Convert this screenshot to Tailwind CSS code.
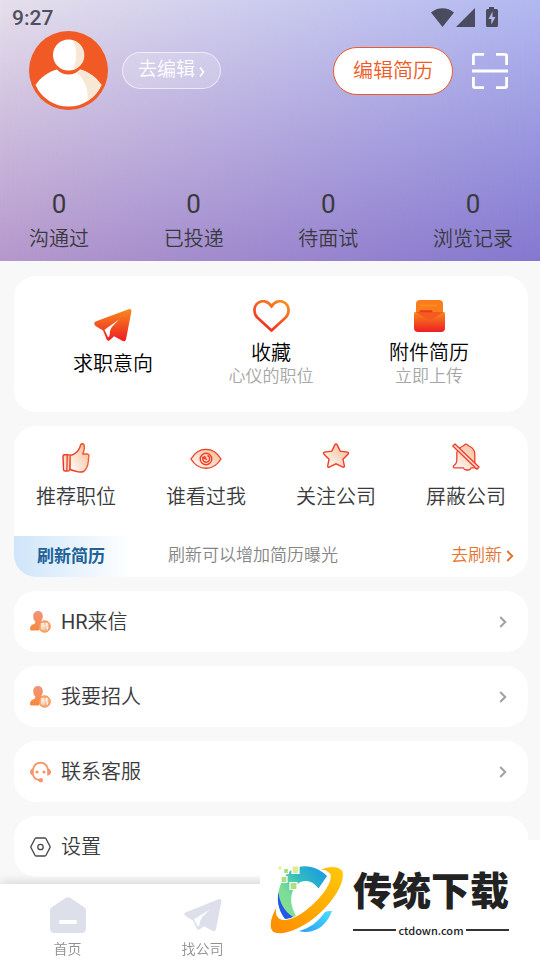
<!DOCTYPE html>
<html lang="zh-CN">
<head>
<meta charset="utf-8">
<meta name="viewport" content="width=device-width, initial-scale=1">
<title>我的</title>
<script src="https://cdn.jsdelivr.net/npm/@tailwindcss/browser@4"></script>
</head>
<body class="min-h-screen bg-[#f8f8f8] font-['Roboto','Noto_Sans_CJK_SC',sans-serif] font-[350] text-[#3a3a3c]">
<svg class="absolute size-0" aria-hidden="true">
  <defs>
    <linearGradient id="fire" x1="0" y1="0" x2="0" y2="1"><stop offset="0" stop-color="#f98a1c"/><stop offset="1" stop-color="#ee1c25"/></linearGradient>
    <linearGradient id="heart" x1="1" y1="0" x2="0.3" y2="1"><stop offset="0" stop-color="#fa931e"/><stop offset="1" stop-color="#f02a26"/></linearGradient>
    <linearGradient id="tint" x1="0" y1="1" x2="1" y2="0"><stop offset="0" stop-color="#ffffff"/><stop offset="1" stop-color="#f4b78f"/></linearGradient>
    <linearGradient id="line" x1="0" y1="0" x2="1" y2="0"><stop offset="0" stop-color="#ee2a2b"/><stop offset="1" stop-color="#f0602f"/></linearGradient>
    <linearGradient id="peach" x1="0" y1="0" x2="0" y2="1"><stop offset="0" stop-color="#f39280"/><stop offset="1" stop-color="#f58b3a"/></linearGradient>
    <symbol id="recruit" viewBox="0 0 21 22">
      <path fill="url(#peach)" d="M8 0c3 0 4.800 2.100 4.800 5.200 0 2.100-.7 3.800-1.800 5 .1 1 .7 1.500 2 2C10 13.500 8.500 16 9 19.400H1.300C.3 19.400 0 18.800 0 18c.2-2.500 1-3.700 3.300-4.700 1.200-.5 2-1 2.100-2.900C4 9.200 3.200 7.400 3.200 5.200 3.200 2.100 5 0 8 0Z"/>
      <circle cx="14.600" cy="15.500" r="5.700" fill="#f8ae7c" stroke="#f58b45"/>
      <path d="M11.500 12.800h2.600M11.500 15h2.600M12 12.500v6M14 12.500v6M15.200 13h3M15.200 15h3M16.700 12v3M15.500 16.800h2.300l-.6 2" stroke="#fff" stroke-width="1" fill="none"/>
    </symbol>
    <symbol id="next" viewBox="0 0 8 12"><path d="M1.200 1l5 5-5 5" fill="none" stroke="currentColor" stroke-width="2"/></symbol>
  </defs>
</svg>

<header class="relative isolate">
  <div class="absolute inset-0 -z-20 bg-linear-to-b from-[#e6e0ec] to-[#b598cc]"></div>
  <div class="absolute inset-0 -z-10 bg-linear-to-b from-[#b1b8f0] to-[#8477cf] [mask-image:linear-gradient(to_right,transparent,black)]"></div>
  <div class="flex h-[31px] items-center justify-between pt-1.5 pr-[41px] pl-3 text-[#504e5c]">
    <span class="text-[21px] font-medium">9:27</span>
    <svg class="mb-1 h-5 w-[68px]" viewBox="0 0 68 20" fill="#4b4b60" aria-hidden="true">
      <path d="M0 5.500C6.500-.2 16.500-.2 23 5.500L11.500 20ZM44 1v19H25Z"/>
      <path fill-rule="evenodd" d="M58 0h5v2h2.500q1.500 0 1.500 1.500v15q0 1.500-1.500 1.500h-9q-1.500 0-1.500-1.500v-15Q55 2 56.500 2H58ZM61.500 4.500 57.500 12h2.800v5.500L64.500 10h-3Z"/>
    </svg>
  </div>
  <div class="flex items-center pr-8 pl-[29px]">
    <svg class="size-[79px]" viewBox="0 0 79 79" aria-label="头像" role="img">
      <circle cx="39.500" cy="39.500" r="39.500" fill="#f15a24"/>
      <circle cx="39.500" cy="24" r="15.500" fill="#fff"/>
      <path d="M44 9.200a15.500 15.500 0 0 1-1 30.100C49 31 48 17 44 9.200Z" fill="#f6e8d4"/>
      <path d="M6.500 54C12 46 19 41 28 38.500q4.500 5 11.500 5t11.500-5C60 41 67 46 72.500 54A36 36 0 0 1 39.500 75.500 36 36 0 0 1 6.500 54Z" fill="#fff"/>
      <path d="M47 41.500q2.500-1 4-3C60 41 67 46 72.500 54q-4.500 10-14 16C60 58 55 47 47 41.500Z" fill="#f6e8d4"/>
    </svg>
    <button class="ml-3.5 flex h-[37px] items-center gap-1 rounded-full border border-white/60 bg-white/20 px-[15px] pb-1 text-[19px] text-white"><span class="pt-1">去编辑</span><svg class="mt-1.5 h-[10px] w-[6px]" viewBox="0 0 6 10" aria-hidden="true"><path d="M1 .5 4.500 5 1 9.500" fill="none" stroke="#fff" stroke-width="1.600"/></svg></button>
    <button class="ml-auto h-12 rounded-full border border-[#f15a24] bg-white px-[19px] text-xl text-[#f15a24]">编辑简历</button>
    <button class="ml-[19px]" aria-label="扫一扫"><svg class="size-9" viewBox="0 0 36 36" fill="none" stroke="#fff" stroke-width="2.800"><path d="M1.400 12V3q0-1.600 1.600-1.600h9M24 1.400h9q1.600 0 1.600 1.600v9M34.600 24v9q0 1.600-1.600 1.600h-9M12 34.600H3q-1.600 0-1.600-1.600v-9M0 18h36"/></svg></button>
  </div>
  <dl class="flex justify-between pt-[76px] pr-[27px] pb-1.5 pl-[29px] text-center">
    <div class="flex flex-col-reverse"><dt class="text-xl leading-[32px]">沟通过</dt><dd class="text-[26px] leading-[37px] font-normal">0</dd></div>
    <div class="flex flex-col-reverse"><dt class="text-xl leading-[32px]">已投递</dt><dd class="text-[26px] leading-[37px] font-normal">0</dd></div>
    <div class="flex flex-col-reverse"><dt class="text-xl leading-[32px]">待面试</dt><dd class="text-[26px] leading-[37px] font-normal">0</dd></div>
    <div class="flex flex-col-reverse"><dt class="text-xl leading-[32px]">浏览记录</dt><dd class="text-[26px] leading-[37px] font-normal">0</dd></div>
  </dl>
</header>

<main class="flex flex-col gap-3.5 pt-[15px] pr-3 pb-20 pl-3.5">
  <section class="grid h-[136px] grid-cols-3 rounded-[22px] bg-white px-5 text-center text-black">
    <a href="#" class="flex flex-col items-center pt-8">
      <svg class="h-[34px] w-[38px]" viewBox="0 0 38 34" aria-hidden="true"><path fill="url(#fire)" d="M1.500 13.500 34.500 1.200q3.300-.8 2.900 2.300L32 31.500q-.9 2.600-3.200 1.500L20 28.300l-4.300 4q-1.800 1.300-3-.8L9 22.500 1.800 18.300q-3-2.800-.3-4.800Z"/><path fill="#fff" d="M25 11.500 10.500 21.800l3.500 7.400q1.500 0 1.700-2.400.1-4.800 1.800-7.300Z"/></svg>
      <span class="mt-1.5 text-xl leading-[32px]">求职意向</span>
    </a>
    <a href="#" class="flex flex-col items-center pt-6">
      <svg class="h-8 w-[37px]" viewBox="0 0 37 32" aria-hidden="true"><path d="M18.500 30.500 4.600 17.700C-.2 13 .8 5.500 5.500 2.700 10-.1 15.500 1.300 18.500 6.500 21.500 1.300 27-.1 31.500 2.700c4.700 2.800 5.700 10.300.9 15Z" fill="none" stroke="url(#heart)" stroke-width="2.700" stroke-linejoin="round"/></svg>
      <span class="mt-1.5 text-xl leading-[30px]">收藏</span><span class="text-[17px] leading-4 text-[#a6a6a6]">心仪的职位</span>
    </a>
    <a href="#" class="flex flex-col items-center pt-6">
      <svg class="h-8 w-[31px]" viewBox="0 0 31 32" aria-hidden="true"><rect x="2" width="27" height="26" rx="4" fill="#fb7c1b"/><path d="M2 12h27v8H2Z" fill="#f55a20"/><path d="M6.500 5.500h16" stroke="#f9941f" stroke-width="1.500"/><path d="M6.500 11.300h11" stroke="#e93a20" stroke-width="2" stroke-linecap="round"/><path fill="url(#fire)" d="M1.500 12 15.500 20.500 29.500 12q1.500-.3 1.500 1.500V28q0 4-4 4H4q-4 0-4-4V13.500q0-1.800 1.500-1.500Z"/></svg>
      <span class="mt-1.5 text-xl leading-[30px]">附件简历</span><span class="text-[17px] leading-4 text-[#a6a6a6]">立即上传</span>
    </a>
  </section>

  <section class="overflow-hidden rounded-[22px] bg-white">
    <div class="flex h-[110px] justify-between px-[22px] pt-[17px] text-xl">
      <a href="#" class="flex flex-col items-center">
        <svg class="h-[30px] w-7" viewBox="0 0 28 30" fill="url(#tint)" stroke="url(#line)" stroke-width="1.400" stroke-linejoin="round" aria-hidden="true"><path d="M8 12.500c4-.5 8.500-4 10-8.500Q18.500.7 20.500.8q2 .2 1.800 4.200-.2 3-1.500 6h4.400q2.200.5 1.600 2.700-.1 1.300-.5 2.300.7 1.500-.3 3.500.2 2-.8 3.500-.2 2-1.400 3-.8 1.800-2.300 2.500-1.500.7-5.500.4Q12 28 8 26.500Z"/><path d="M2.500 11.800h4.200q1.500 0 1.500 1.500L7.500 27q0 1-1.200 1H3q-1.300 0-1.400-1.300L1 13.500q0-1.700 1.500-1.700ZM5.300 12 4.800 28"/></svg>
        <span class="mt-2 leading-[32px]">推荐职位</span>
      </a>
      <a href="#" class="flex flex-col items-center">
        <svg class="h-[30px] w-8" viewBox="0 0 32 30" fill="none" stroke="#ee4029" stroke-width="1.400" aria-hidden="true"><path fill="url(#tint)" d="M1 16C8.500 3.200 23.500 3.200 31 16 23.500 28.400 8.500 28.400 1 16Z"/><circle cx="16" cy="16" r="5.800"/><path d="M13.500 13.500a3.500 3.500 0 1 0 4-1M13 14.500l3 1.500-1.500-3"/></svg>
        <span class="mt-2 leading-[32px]">谁看过我</span>
      </a>
      <a href="#" class="flex flex-col items-center">
        <svg class="h-[30px] w-7" viewBox="0 0 28 30" aria-hidden="true"><path d="m14 .9q.8 0 1.200 1l3 6.200 7.400 1q1.600.6.600 1.900L21 16.300l1.400 6.700q0 1.500-1.500 1.200L14 20.800l-6.800 3.400q-1.500.4-1.500-1.100l1.300-6.900L1.800 11q-1-1.300.6-1.900l7.400-1 3-6.200q.4-1 1.200-1Z" fill="url(#tint)" stroke="#ee4029" stroke-width="1.400"/></svg>
        <span class="mt-2 leading-[32px]">关注公司</span>
      </a>
      <a href="#" class="flex flex-col items-center">
        <svg class="h-[30px] w-7" viewBox="0 0 28 30" stroke="#ee4029" stroke-width="1.300" stroke-linejoin="round" aria-hidden="true"><path fill="url(#tint)" d="M10 3.500q2-.6 2.500-1.800 1.500-1 3 0 .4 1.200 2.500 1.800 4.800 2.300 4.800 8v8L26 24.800H19q-.5 2-2.500 2.200h-2.500q-2-.3-2.500-2.200H2q-1-.3-.5-1.800 3-2 3.300-5v-8Q5.300 6 10 3.500Z"/><path fill="#fbd9cc" d="M.8 3 3 1l24 23-2 2.200Z"/></svg>
        <span class="mt-2 leading-[32px]">屏蔽公司</span>
      </a>
    </div>
    <div class="flex h-[41px] items-center bg-linear-to-r from-[#cfe5fa] to-white to-[118px] pr-3.5 pl-[23px] text-[17px]">
      <strong class="w-[131px] font-bold text-[#206197]">刷新简历</strong>
      <span class="pb-0.5 text-[#858585]">刷新可以增加简历曝光</span>
      <button class="ml-auto flex items-center gap-1 pb-0.5 text-[#e2742f]">去刷新<svg class="h-3 w-2" aria-hidden="true"><use href="#next"/></svg></button>
    </div>
  </section>

  <nav class="flex flex-col gap-3.5 text-xl" aria-label="更多">
    <a href="#" class="flex h-[61px] items-center gap-[10px] rounded-[22px] bg-white pr-[21px] pl-4"><svg class="h-[22px] w-[21px]" aria-hidden="true"><use href="#recruit"/></svg><span><span class="font-normal">HR</span>来信</span><svg class="ml-auto h-3 w-2 text-[#a0a0a0]" aria-hidden="true"><use href="#next"/></svg></a>
    <a href="#" class="flex h-[61px] items-center gap-[10px] rounded-[22px] bg-white pr-[21px] pl-4"><svg class="h-[22px] w-[21px]" aria-hidden="true"><use href="#recruit"/></svg>我要招人<svg class="ml-auto h-3 w-2 text-[#a0a0a0]" aria-hidden="true"><use href="#next"/></svg></a>
    <a href="#" class="flex h-[61px] items-center gap-[10px] rounded-[22px] bg-white pr-[21px] pl-4"><svg class="h-[22px] w-[21px]" viewBox="0 0 21 22" fill="none" stroke="#f5966a" stroke-width="1.900" aria-hidden="true"><path d="M3 8.500C4 3.800 7 1.800 10.500 1.800S17 3.800 18 8.500M3 14q1.500 4.800 7 5.200"/><path stroke="none" fill="#f5966a" d="M3.800 7.500v7.200Q0 14.500 0 11.100T3.800 7.500ZM17.200 7.500v7.200q3.800-.2 3.800-3.600t-3.800-3.600Z"/><g stroke="none" fill="#f5966a"><circle cx="7" cy="11" r="1.600"/><circle cx="14" cy="11" r="1.600"/><circle cx="10.800" cy="19.200" r="2.200"/></g></svg>联系客服<svg class="ml-auto h-3 w-2 text-[#a0a0a0]" aria-hidden="true"><use href="#next"/></svg></a>
    <a href="#" class="flex h-[61px] items-center gap-[10px] rounded-[22px] bg-white pr-[21px] pl-4"><svg class="h-[22px] w-[21px]" viewBox="0 0 21 22" fill="none" stroke="#48484a" stroke-width="1.300" aria-hidden="true"><path stroke-linejoin="round" d="M6 2h9q.6 0 .9.500L20 10.400q.3.600 0 1.200l-4.100 7.900q-.3.500-.9.500H6q-.6 0-.9-.5L1 11.600q-.3-.6 0-1.200L5.100 2.500Q5.400 2 6 2Z"/><circle cx="10.500" cy="11" r="2.700"/></svg>设置<svg class="ml-auto h-3 w-2 text-[#a0a0a0]" aria-hidden="true"><use href="#next"/></svg></a>
  </nav>
</main>

<nav class="fixed inset-x-0 bottom-0 grid h-[76px] grid-cols-4 bg-white text-sm text-[#909090] shadow-[0_-2px_10px_rgba(0,0,0,0.14)]" aria-label="主导航">
  <a href="#" class="flex flex-col items-center pt-3">
    <svg class="h-[38px] w-9" viewBox="0 0 36 38" aria-hidden="true"><path fill="#dddfeb" d="M15.500 2q2.500-1.600 5 0l13.700 9.200Q36 12.500 36 14.500V32q0 5-5 5H5q-5 0-5-5V14.500q0-2 1.800-3.300Z"/><rect x="9" y="24" width="18" height="4" rx="1.500" fill="#fff"/></svg>
    <span class="mt-[5px] leading-5">首页</span>
  </a>
  <a href="#" class="flex flex-col items-center pt-3">
    <svg class="h-[38px] w-[38px]" viewBox="0 -3 38 38" aria-hidden="true"><path fill="#dddfeb" d="M1.500 13.500 34.500.2q3.300-.8 2.900 2.300L32 30.500q-.9 2.600-3.200 1.500L20 27.300l-4.300 3q-1.800 1.300-3-.8L9 21.500 1.800 17.300q-3-2.800-.3-3.800Z"/><path fill="#fff" d="M26 10.500 10 20.300l3.800 7.200q1.500 0 1.700-2.400.6-4.300 2.800-7.300Z"/></svg>
    <span class="mt-[5px] leading-5">找公司</span>
  </a>
</nav>

<aside class="fixed right-0 bottom-0 flex h-[120px] w-[280px] gap-[9px] bg-white pt-[25px] pl-[10px] text-[#222]">
  <svg class="h-[70px] w-[74px]" viewBox="0 0 74 70" aria-hidden="true">
    <defs>
      <linearGradient id="arc" x1="0" y1="1" x2="1" y2="0"><stop offset="0" stop-color="#8be58a"/><stop offset=".35" stop-color="#7bdc98"/><stop offset=".6" stop-color="#32bdc0"/><stop offset="1" stop-color="#1593e8"/></linearGradient>
      <linearGradient id="ring" x1="0" y1="1" x2="1" y2="0"><stop offset="0" stop-color="#ff8a00"/><stop offset="1" stop-color="#ffc90a"/></linearGradient>
      <linearGradient id="tail" x1="0" y1="1" x2="1" y2="0"><stop offset="0" stop-color="#2a9df4"/><stop offset="1" stop-color="#4cdcff"/></linearGradient>
    </defs>
    <path fill="url(#arc)" d="M57 11 48.500 23.500C42 15 33 14 27 19.500c-8 7.500-8 22 1.500 35L17 56C8 47 6 33 10 21 15 5 29-1 41 2q9 2 16 9Z"/>
    <path fill="#2358e8" d="M8.500 27c1 12 7 22 20 28l-11 1.500C9 48 6.500 37 8.500 27Z"/>
    <path fill="url(#tail)" d="M62 46c-5 14-17 24-33 20 11-3 19-9 26-19q3-1.500 7-1Z"/>
    <path fill="url(#ring)" stroke="#fff" stroke-width="1" d="M50 5C57 .5 70 0 72.800 6.500 76 17 64 37 46 52 29 66 8 73 2 66-2 61 1 50 7 41c-1 6-1 9 2 12 5 4 17 0 28-9C53 31 62 17 60 9q-3-4-10-4Z"/>
    <g stroke="#fff" stroke-width="1.200"><path fill="#dced91" d="M22 1h7v7.500h-7Z"/><path fill="#a8e07b" d="M13.500 3.500h5v5h-5ZM11 11.500h6v6h-6Z"/><path fill="#a9e17f" d="M20 17.500h7v7h-7Z"/><path fill="#e6ee9b" d="M8 1h4v4H8Z"/></g>
  </svg>
  <div class="w-40">
    <p class="text-[39px] leading-[54px] font-black whitespace-nowrap">传统下载</p>
    <p class="flex w-[156px] items-center gap-0.5 text-[11px] leading-[22px] font-medium font-['Noto_Sans_CJK_SC',sans-serif]"><span class="h-0.5 flex-1 bg-[#333]"></span>ctdown.com<span class="h-0.5 flex-1 bg-[#333]"></span></p>
  </div>
</aside>
</body>
</html>
